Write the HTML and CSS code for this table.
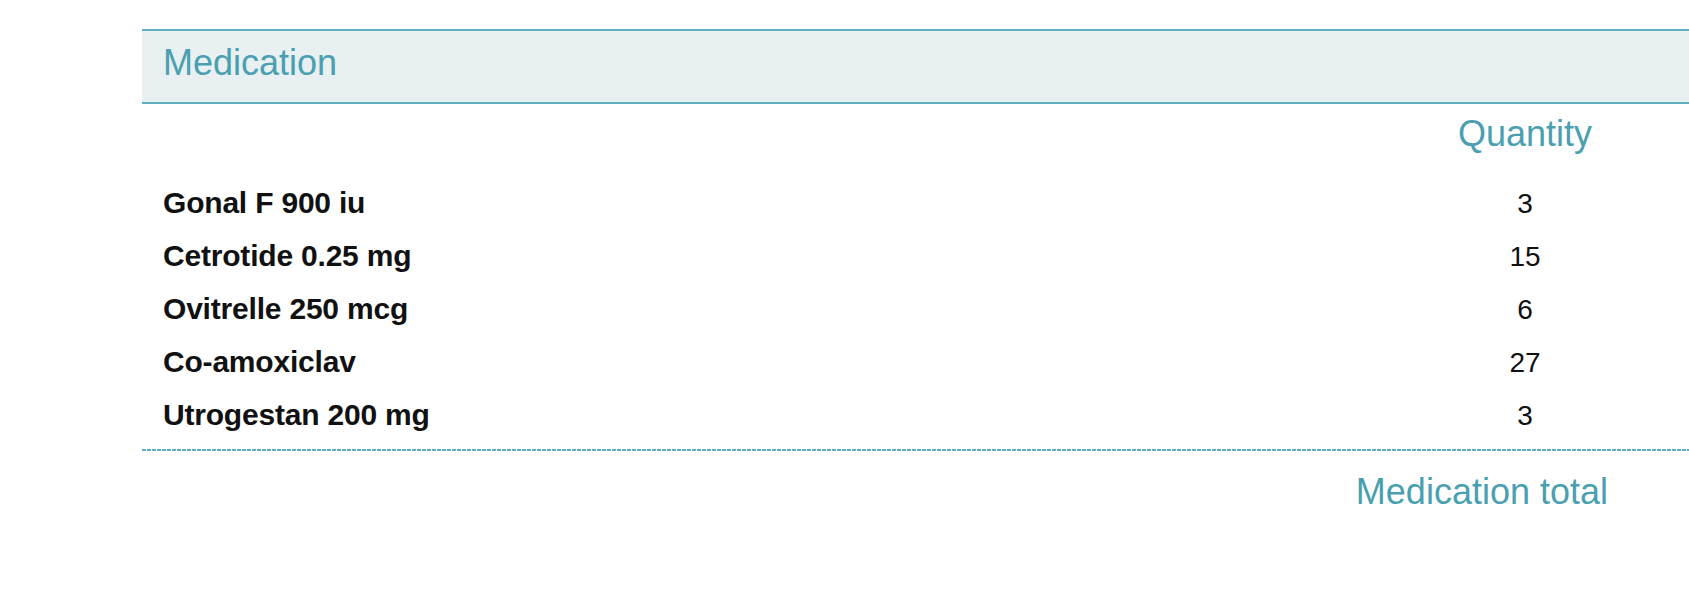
FILE: index.html
```html
<!DOCTYPE html>
<html lang="en">
<head>
    <meta charset="UTF-8">
    <title>Medication</title>
    <link rel="stylesheet" href="styles.css">
</head>
<body>
    <div class="section">
        <div class="section-head">Medication</div>

        <div class="table">
            <div class="col-head"></div>
            <div class="col-head qty">Quantity</div>

            <div class="name">Gonal F 900 iu</div>
            <div class="qty">3</div>

            <div class="name">Cetrotide 0.25 mg</div>
            <div class="qty">15</div>

            <div class="name">Ovitrelle 250 mcg</div>
            <div class="qty">6</div>

            <div class="name">Co-amoxiclav</div>
            <div class="qty">27</div>

            <div class="name">Utrogestan 200 mg</div>
            <div class="qty">3</div>
        </div>

        <div class="divider"></div>

        <div class="total">Medication total</div>
    </div>
</body>
</html>
```

FILE: styles.css
```css
html, body {
    overflow: hidden;
}
body {
    margin: 0;
    padding: 29px 0 0 142px;
    font-family: "Liberation Sans", Arial, sans-serif;
    background: #ffffff;
    color: #111111;
}
.section-head {
    background: #e8f0f2;
    border-top: 2px solid #5fb0be;
    border-bottom: 2px solid #5fb0be;
    padding: 12px 0 19px 21px;
    font-size: 36px;
    line-height: 40px;
    color: #4a9fb1;
}
.table {
    display: grid;
    grid-template-columns: 1fr 328px;
    align-items: baseline;
    margin-top: 10px;
}
.col-head {
    font-size: 36px;
    line-height: 40px;
    color: #4a9fb1;
    margin-bottom: 23px;
}
.name {
    padding-left: 21px;
    font-size: 30px;
    font-weight: bold;
    letter-spacing: -0.2px;
    line-height: 52px;
}
.qty {
    text-align: center;
    font-size: 28px;
    line-height: 52px;
}
.col-head.qty {
    font-size: 36px;
    line-height: 40px;
}
.divider {
    height: 2px;
    margin-top: 7px;
    background: repeating-linear-gradient(to right, #5fb0be 0 4px, transparent 4px 5px);
}
.total {
    margin-top: 21px;
    padding-right: 81px;
    text-align: right;
    font-size: 36px;
    line-height: 40px;
    color: #4a9fb1;
}
```
